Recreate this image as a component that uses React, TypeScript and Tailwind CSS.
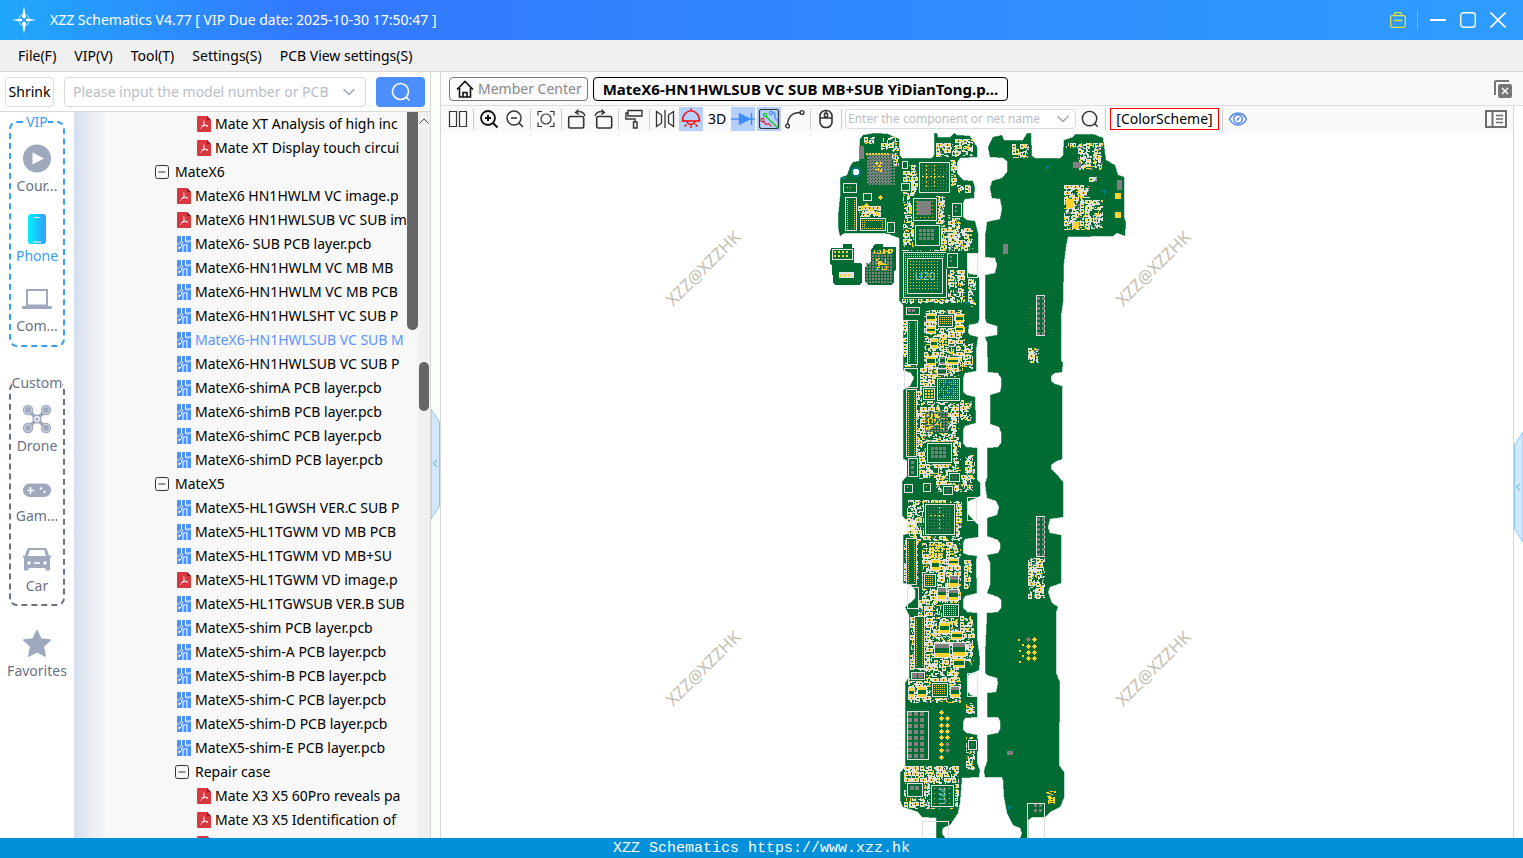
import type { ReactNode } from 'react';

type FileKind = 'pdf' | 'pcb' | 'folder';

type TreeRow = {
  kind: FileKind;
  label: string;
  level: number;
  active?: boolean;
};

const rows: TreeRow[] = [
  { kind: 'pdf', label: 'Mate XT Analysis of high inc', level: 2 },
  { kind: 'pdf', label: 'Mate XT Display touch circui', level: 2 },
  { kind: 'folder', label: 'MateX6', level: 0 },
  { kind: 'pdf', label: 'MateX6 HN1HWLM VC image.p', level: 1 },
  { kind: 'pdf', label: 'MateX6 HN1HWLSUB VC SUB im', level: 1 },
  { kind: 'pcb', label: 'MateX6- SUB PCB layer.pcb', level: 1 },
  { kind: 'pcb', label: 'MateX6-HN1HWLM VC MB MB', level: 1 },
  { kind: 'pcb', label: 'MateX6-HN1HWLM VC MB PCB', level: 1 },
  { kind: 'pcb', label: 'MateX6-HN1HWLSHT VC SUB P', level: 1 },
  { kind: 'pcb', label: 'MateX6-HN1HWLSUB VC SUB M', level: 1, active: true },
  { kind: 'pcb', label: 'MateX6-HN1HWLSUB VC SUB P', level: 1 },
  { kind: 'pcb', label: 'MateX6-shimA PCB layer.pcb', level: 1 },
  { kind: 'pcb', label: 'MateX6-shimB PCB layer.pcb', level: 1 },
  { kind: 'pcb', label: 'MateX6-shimC PCB layer.pcb', level: 1 },
  { kind: 'pcb', label: 'MateX6-shimD PCB layer.pcb', level: 1 },
  { kind: 'folder', label: 'MateX5', level: 0 },
  { kind: 'pcb', label: 'MateX5-HL1GWSH VER.C SUB P', level: 1 },
  { kind: 'pcb', label: 'MateX5-HL1TGWM VD MB PCB', level: 1 },
  { kind: 'pcb', label: 'MateX5-HL1TGWM VD MB+SU', level: 1 },
  { kind: 'pdf', label: 'MateX5-HL1TGWM VD image.p', level: 1 },
  { kind: 'pcb', label: 'MateX5-HL1TGWSUB VER.B SUB', level: 1 },
  { kind: 'pcb', label: 'MateX5-shim PCB layer.pcb', level: 1 },
  { kind: 'pcb', label: 'MateX5-shim-A PCB layer.pcb', level: 1 },
  { kind: 'pcb', label: 'MateX5-shim-B PCB layer.pcb', level: 1 },
  { kind: 'pcb', label: 'MateX5-shim-C PCB layer.pcb', level: 1 },
  { kind: 'pcb', label: 'MateX5-shim-D PCB layer.pcb', level: 1 },
  { kind: 'pcb', label: 'MateX5-shim-E PCB layer.pcb', level: 1 },
  { kind: 'folder', label: 'Repair case', level: 1 },
  { kind: 'pdf', label: 'Mate X3 X5 60Pro reveals pa', level: 2 },
  { kind: 'pdf', label: 'Mate X3 X5 Identification of', level: 2 },
  { kind: 'pdf', label: '', level: 2 },
];

const menus = ['File(F)', 'VIP(V)', 'Tool(T)', 'Settings(S)', 'PCB View settings(S)'];

function PdfIcon() {
  return (
    <svg width="14" height="16" viewBox="0 0 14 16" className="shrink-0">
      <path d="M1 0h9l4 4v11a1 1 0 0 1-1 1H1a1 1 0 0 1-1-1V1a1 1 0 0 1 1-1z" fill="#d93840" />
      <path d="M10 0v4h4z" fill="#8e1c24" />
      <path d="M6.500 4.500c1.200 2 .2 5-3 8M7 7.500c.8 1.600 2 2.500 4 2.800M4.500 10.500c2-1 4-1.200 6-.8" fill="none" stroke="#fff" strokeWidth="1" />
    </svg>
  );
}

function PcbIcon() {
  return (
    <svg width="14" height="16" viewBox="0 0 14 16" className="shrink-0">
      <rect width="14" height="16" rx="1" fill="#4a90ff" />
      <path d="M4.500 0v5M8.500 0v6M11 5h3M0 8h2M4.500 7.500v3l-2 1.500M10 9v7M6 9h4M6 9v7" fill="none" stroke="#fff" />
      <circle cx="4.500" cy="6.500" r="1.200" fill="#4a90ff" stroke="#fff" strokeWidth=".8" />
      <circle cx="10.500" cy="5.500" r="1.200" fill="#4a90ff" stroke="#fff" strokeWidth=".8" />
      <circle cx="2" cy="12" r="1" fill="#fff" />
    </svg>
  );
}

function MinusBox() {
  return (
    <svg width="14" height="14" viewBox="0 0 14 14" className="shrink-0" fill="none" stroke="#333">
      <rect x=".5" y=".5" width="13" height="13" rx="2" />
      <path d="M3.500 7h7" />
    </svg>
  );
}

function SearchGlyph({ color, size = 20 }: { color: string; size?: number }) {
  return (
    <svg width={size} height={size} viewBox="0 0 20 20" fill="none" stroke={color} strokeWidth="1.600">
      <circle cx="9.500" cy="9.500" r="8" />
      <path d="M15 15l3.500 3.500" />
    </svg>
  );
}

function TitleBar() {
  return (
    <header className="flex h-10 shrink-0 items-center bg-linear-to-r from-[#1fa8fb] via-[#3377ff] via-20% to-[#2e9dff] text-white">
      <svg width="24" height="28" viewBox="0 0 24 28" className="ml-3">
        <circle cx="12" cy="14" r="5.500" fill="none" stroke="#bfe3ff" strokeWidth="1" strokeDasharray="5 3.600" strokeDashoffset="-2" />
        <path d="M12 0l2 11-2 2-2-2zM12 28l2-11-2-2-2 2zM0 14l9-1.500 2 1.500-2 1.500zM24 14l-9-1.500-2 1.500 2 1.500z" fill="#fff" />
        <circle cx="12" cy="14" r="1.500" fill="#3b8cff" />
      </svg>
      <h1 className="ml-3.5 grow text-sm">XZZ Schematics V4.77 [ VIP Due date: 2025-10-30 17:50:47 ]</h1>
      <button aria-label="Toolbox">
        <svg width="16" height="16" viewBox="0 0 16 16" fill="none" stroke="#e2e337" strokeWidth="1.300">
          <rect x=".7" y="3.700" width="14.600" height="11.600" rx="1.500" />
          <path d="M4.500 3.500V2A1.300 1.300 0 0 1 5.800.7h4.400A1.300 1.300 0 0 1 11.500 2v1.500M4 8.500h8" />
        </svg>
      </button>
      <span className="ml-[11px] h-5 w-px bg-[#63b6ff]" />
      <div className="mr-[17px] ml-3 flex gap-3.5">
        <button aria-label="Minimize">
          <svg width="16" height="16" viewBox="0 0 16 16" stroke="#fff" strokeWidth="2"><path d="M0 8h16" /></svg>
        </button>
        <button aria-label="Maximize">
          <svg width="16" height="16" viewBox="0 0 16 16" fill="none" stroke="#fff" strokeWidth="1.400"><rect x=".7" y=".7" width="14.600" height="14.600" rx="3" /></svg>
        </button>
        <button aria-label="Close">
          <svg width="16" height="16" viewBox="0 0 16 16" stroke="#fff" strokeWidth="1.600"><path d="M.5.5l15 15M15.500.5l-15 15" /></svg>
        </button>
      </div>
    </header>
  );
}

function RailItem({ label, active, children }: { label: string; active?: boolean; children: ReactNode }) {
  return (
    <button className={`flex h-[70px] w-full flex-col items-center text-sm leading-5 ${active ? 'text-[#3b9cf5]' : 'text-[#6b7184]'}`}>
      <span className="flex h-9 items-center">
        <svg width="30" height="32" viewBox="0 0 30 32" fill="#a0a8bd">{children}</svg>
      </span>
      <span className="-mt-px">{label}</span>
    </button>
  );
}

function Rail() {
  return (
    <nav className="flex w-[74px] shrink-0 flex-col items-center bg-white">
      <fieldset className="w-14 min-w-0 rounded-lg border-2 border-dashed border-[#3b9cf5]">
        <legend className="mx-auto text-sm leading-5 text-[#3b9cf5]">VIP</legend>
        <div className="-mt-px h-[214px] pt-2.5">
          <RailItem label="Cour...">
            <circle cx="15" cy="15.500" r="14" />
            <path d="M10.500 9.500v12l11.500-6z" fill="#fff" />
          </RailItem>
          <RailItem label="Phone" active>
            <defs>
              <linearGradient id="phone" x1="0" x2="1">
                <stop offset="0" stopColor="#00f0ff" />
                <stop offset="1" stopColor="#389cfb" />
              </linearGradient>
            </defs>
            <rect x="6" y="1" width="18" height="30" rx="3" fill="url(#phone)" />
            <path d="M12.500 4.500h5M11 29h8" stroke="#fff" strokeWidth="1.200" />
          </RailItem>
          <RailItem label="Com...">
            <path d="M4 6h22v17h4v1.500a1.500 1.500 0 0 1-1.500 1.500h-27A1.500 1.500 0 0 1 0 24.500V23h4zM6 8v13.500h18V8z" fillRule="evenodd" />
          </RailItem>
        </div>
      </fieldset>
      <fieldset className="mt-[26px] w-14 min-w-0 rounded-lg border-2 border-dashed border-[#6b7184]">
        <legend className="mx-auto text-sm leading-5 text-[#6b7184]">Custom</legend>
        <div className="-mt-0.5 h-[213px] pt-2.5">
          <RailItem label="Drone">
            <path d="M7 8l16 16M23 8L7 24" stroke="#a0a8bd" strokeWidth="3.500" />
            {[[6, 7], [24, 7], [6, 25], [24, 25]].map(([x, y]) => (
              <g key={`${x}-${y}`}>
                <circle cx={x} cy={y} r="5.200" />
                <circle cx={x} cy={y} r="3.600" fill="none" stroke="#dfe3ec" strokeWidth=".8" />
              </g>
            ))}
            <circle cx="15" cy="16" r="4.500" />
            <circle cx="15" cy="16" r="2.300" fill="none" stroke="#fff" strokeWidth="1.200" />
          </RailItem>
          <RailItem label="Gam...">
            <rect x="1" y="10.500" width="28" height="13.500" rx="6.700" />
            <path d="M8.500 14v7M5 17.500h7" stroke="#fff" strokeWidth="1.500" />
            <circle cx="19" cy="15.500" r="1.200" fill="#fff" />
            <circle cx="22.500" cy="19" r="1.200" fill="#fff" />
          </RailItem>
          <RailItem label="Car">
            <path d="M7 5h16q1.500 0 2 1.500l2 6h2v2h-1v12q0 1-1 1h-2.500q-1 0-1-1V25h-17v1.500q0 1-1 1H3q-1 0-1-1v-12H1v-2h2l2-6Q5.500 5 7 5zM7.800 7l-1.800 6h18L22.200 7z" fillRule="evenodd" />
            <circle cx="7" cy="20" r="1.800" fill="#fff" />
            <circle cx="23" cy="20" r="1.800" fill="#fff" />
            <path d="M12 20h6" stroke="#fff" strokeWidth="1.600" />
          </RailItem>
        </div>
      </fieldset>
      <div className="mt-5 w-full">
        <RailItem label="Favorites">
          <path d="M15 2.500l3.900 8.600 9.300 1-6.900 6.400 1.900 9.600L15 23.600l-8.200 4.500 1.900-9.600-6.900-6.400 9.300-1z" stroke="#a0a8bd" strokeWidth="1.500" strokeLinejoin="round" />
        </RailItem>
      </div>
    </nav>
  );
}

function FileTree() {
  return (
    <div className="flex min-w-0 grow bg-[#f8f8f8]">
      <div className="w-8 shrink-0 bg-linear-to-r from-[#d5dff0] via-[#e8ebf2] to-[#f8f8f8]" />
      <ul className="min-w-0 grow overflow-hidden pl-[49px] text-sm leading-6">
        {rows.map(row => (
          <li key={row.label} className={row.level === 0 ? '' : row.level === 1 ? 'pl-5' : 'pl-10'}>
            <button className={`flex h-6 items-center whitespace-nowrap ${row.active ? 'text-[#5c95ff]' : 'text-black'}`}>
              <span className={row.kind === 'folder' ? 'mr-1.5' : 'mr-1 ml-0.5'}>
                {row.kind === 'pdf' && <PdfIcon />}
                {row.kind === 'pcb' && <PcbIcon />}
                {row.kind === 'folder' && <MinusBox />}
              </span>
              {row.label}
            </button>
          </li>
        ))}
      </ul>
      <div className="w-[11px] shrink-0">
        <div className="h-[218px] rounded-b-md bg-[#666]" />
      </div>
      <div className="flex w-3 shrink-0 flex-col items-center bg-[#f0f0f0] pt-1.5">
        <svg width="10" height="6" viewBox="0 0 10 6" fill="none" stroke="#444"><path d="M.5 5.500L5 1l4.500 4.500" /></svg>
        <div className="mt-[238px] h-[49px] w-2.5 rounded-full bg-[#666]" />
      </div>
    </div>
  );
}

function Sidebar() {
  return (
    <aside className="flex w-[431px] shrink-0 flex-col overflow-hidden border-r border-[#d8d8d8] bg-white">
      <form className="flex h-10 shrink-0 items-center border-b border-[#d8dbd8] px-[5px]">
        <button type="button" className="h-[30px] w-[49px] shrink-0 rounded-sm border border-[#ddd] text-sm">Shrink</button>
        <label className="ml-2.5 flex h-[30px] min-w-0 grow items-center rounded-sm border border-[#d8dbe2] pr-2.5 pl-2">
          <input className="min-w-0 grow text-sm outline-none placeholder:text-[#b9bec8]" placeholder="Please input the model number or PCB" aria-label="Model number or PCB" />
          <svg width="12" height="8" viewBox="0 0 12 8" fill="none" stroke="#a0a5b0" strokeWidth="1.500"><path d="M.5 1L6 6.500 11.500 1" /></svg>
        </label>
        <button type="button" aria-label="Search" className="ml-2.5 flex h-[30px] w-[49px] shrink-0 items-center justify-center rounded-sm bg-[#4c90ff]">
          <SearchGlyph color="#fff" />
        </button>
      </form>
      <div className="flex min-h-0 grow">
        <Rail />
        <FileTree />
      </div>
    </aside>
  );
}

function Tool({ label, active, children }: { label: string; active?: boolean; children: ReactNode }) {
  return (
    <button aria-label={label} className={`flex size-6 shrink-0 items-center justify-center ${active ? 'bg-[#b5d0fc]' : ''}`}>
      <svg width="24" height="24" viewBox="0 0 24 24" fill="none" stroke="#333" strokeWidth="1.400">{children}</svg>
    </button>
  );
}

function Separator() {
  return <span className="mx-px h-5 w-px shrink-0 bg-[#ccc]" />;
}

function Toolbar() {
  return (
    <div className="flex h-[26px] shrink-0 items-center gap-0.5 bg-[#fafafa] pl-[5px]">
      <Tool label="Split view"><path d="M3.500 4.500h7v15h-7zM13.500 4.500h7v15h-7z" strokeWidth="1.200" /></Tool>
      <Separator />
      <Tool label="Zoom in"><circle cx="11" cy="11" r="7" strokeWidth="1.800" stroke="#111" /><path d="M16 16l4.500 4.500M11 8v6M8 11h6" strokeWidth="2" stroke="#111" /></Tool>
      <Tool label="Zoom out"><circle cx="11" cy="11" r="7" /><path d="M16 16l4 4M8 11h6" strokeWidth="1.600" /></Tool>
      <Separator />
      <Tool label="Fit"><path d="M4 8.500V4.500h4M16 4.500h4v4M20 15.500v4h-4M8 19.500H4v-4" strokeWidth="1.200" /><circle cx="12" cy="12" r="5" strokeWidth="1.200" /></Tool>
      <Separator />
      <Tool label="Rotate left"><rect x="3.700" y="9.500" width="15" height="11.500" rx="1.500" strokeWidth="1.600" /><path d="M11 5.500C15 3.500 19 5 20 9M13.500 2.500L10.500 5.500l3.500 2" /></Tool>
      <Tool label="Rotate right"><rect x="5.700" y="9.500" width="15" height="11.500" rx="1.500" strokeWidth="1.600" /><path d="M4 9C5 5 9 3.500 13.500 5.500M10.500 2.500l3 3-3.500 2" /></Tool>
      <Separator />
      <Tool label="Format"><path d="M6 3.500h14v5.500H6zM6 6H4v6h9v3M11.500 15h3.500v6h-3.500z" /></Tool>
      <Separator />
      <Tool label="Mirror"><path d="M3.500 4.500l5 3.500v8l-5 3.500zM20.500 4.500l-5 3.500v8l5 3.500zM12 3v18" strokeWidth="1.300" /></Tool>
      <Tool label="Lamp" active><path d="M3.500 14C3.500 .5 20.500 .5 20.500 14zM8.500 14v2q3.500 3 7 0v-2M12 1.500v3M12 18.500v2.500M7.500 17.500L5.500 19.500M16.500 17.500l2 2" stroke="#f00" strokeWidth="1.400" /></Tool>
      <button className="w-6 text-center text-sm">3D</button>
      <Tool label="Diode" active><path d="M0 12h24" stroke="#3f8cff" /><path d="M8.500 7v10l10-5z" fill="#3f8cff" stroke="#3f8cff" /><path d="M20.500 6v12" stroke="#3f8cff" /></Tool>
      <Tool label="Nets" active>
        <g strokeWidth="1.200">
          <rect x="2.500" y="2.500" width="19" height="19" rx="2" stroke="#333" />
          <path d="M9 9.500L21 21" stroke="#12c41c" /><circle cx="8" cy="8" r="1.600" stroke="#12c41c" />
          <path d="M15.500 6h2.500v5l3 3" stroke="#3f8cff" /><circle cx="14" cy="6" r="1.600" stroke="#3f8cff" />
          <path d="M6.500 14.500l2.500 3 3-1 2 3" stroke="#f0202c" /><circle cx="5.500" cy="13" r="1.600" stroke="#f0202c" />
        </g>
      </Tool>
      <Tool label="Route"><path d="M4.500 17.500C5 10 9.500 5.500 17.500 5.500" /><circle cx="4.500" cy="19" r="1.900" /><circle cx="19" cy="5.500" r="1.900" /></Tool>
      <Separator />
      <Tool label="Mouse"><rect x="6" y="3.500" width="12" height="17" rx="5.500" strokeWidth="1.600" /><path d="M6 11h12M12 3.500v3M10.500 6.500h3v3.500h-3z" /></Tool>
      <Separator />
      <label className="flex h-5 w-[231px] items-center rounded-sm border border-[#d8dbe2] bg-white pr-1.5 pl-0.5">
        <input className="min-w-0 grow text-xs outline-none placeholder:text-[#b9bec8]" placeholder="Enter the component or net name" aria-label="Component or net name" />
        <svg width="12" height="8" viewBox="0 0 12 8" fill="none" stroke="#a0a5b0" strokeWidth="1.500"><path d="M.5 1L6 6.500 11.500 1" /></svg>
      </label>
      <button aria-label="Find" className="flex size-6 items-center justify-center"><SearchGlyph color="#333" size={18} /></button>
      <Separator />
      <button className="ml-px h-[22px] w-[109px] border border-[#f00] bg-white text-sm leading-5">[ColorScheme]</button>
      <Separator />
      <Tool label="Visibility"><path d="M3.500 12C7.500 4 16.500 4 20.500 12 16.500 20 7.500 20 3.500 12z" stroke="#4a83e8" /><circle cx="12" cy="12" r="4.300" stroke="#4a83e8" /><path d="M10.500 13.500l3-3" stroke="#4a83e8" /></Tool>
      <button aria-label="Side panel" className="mr-1.5 ml-auto">
        <svg width="22" height="18" viewBox="0 0 22 18" fill="none" stroke="#6e6e6e" strokeWidth="2">
          <path d="M1 1h20v16H1zM7.500 1v16" />
          <path d="M11 5.500h7M11 9h7M11 12.500h7" strokeWidth="1.400" />
        </svg>
      </button>
    </div>
  );
}

// ---- board drawing ----

const GREEN = '#006b33';
const YELLOW = '#ffd42e';
const SILK = '#e2e2e2';
const GRAY = '#808080';
const TEAL = '#007b83';

type Box = [number, number, number, number];

// short dashes and pads spread over an area, repeatable for a given seed
function scatter([x, y, w, h]: Box, count: number, seed: number) {
  let s = seed * 7919 + 17;
  const next = (n: number) => {
    s = (s * 1103515245 + 12345) % 2147483648;
    return Math.floor((s / 2147483648) * n);
  };
  let d = '';
  for (let i = 0; i < count; i++) {
    const long = 1 + next(4);
    const shape = next(5);
    const dw = shape < 2 ? long : shape === 4 ? 2 : 1;
    const dh = shape < 2 ? 1 : shape === 4 ? 2 : long;
    d += `M${x + next(w - dw)} ${y + next(h - dh)}h${dw}v${dh}h-${dw}z`;
  }
  return d;
}

// outlined two-pad parts laid on a loose raster, some places left empty
function smallParts([x, y, w, h]: Box, seed: number) {
  const outline: string[] = [];
  const pads: string[] = [];
  let s = seed * 31 + 7;
  for (let j = y; j + 5 <= y + h; j += 6) {
    for (let i = x; i + 7 <= x + w; i += 8) {
      s = (s * 1103515245 + 12345) % 2147483648;
      const pick = Math.floor(s / 65536) % 3;
      if (pick === 0) {
        outline.push(`M${i + 0.5} ${j + 0.5}h6v3h-6z`);
        pads.push(`M${i + 1} ${j + 1}h2v2h-2zM${i + 4} ${j + 1}h2v2h-2z`);
      } else if (pick === 1) {
        outline.push(`M${i + 0.5} ${j + 0.5}h3v4h-3z`);
        pads.push(`M${i + 1} ${j + 1}h2v1h-2zM${i + 1} ${j + 3}h2v1h-2z`);
      }
    }
  }
  return { outline: outline.join(''), pads: pads.join('') };
}

function grid([x, y, w, h]: Box, step: number, size: number) {
  let d = '';
  for (let j = y; j + size <= y + h; j += step) {
    for (let i = x; i + size <= x + w; i += step) d += `M${i} ${j}h${size}v${size}h-${size}z`;
  }
  return d;
}

function Parts({ areas, density = 0.15 }: { areas: Box[]; density?: number }) {
  return (
    <>
      {areas.map((a, i) => {
        const n = Math.round(a[2] * a[3] * density);
        const small = smallParts(a, i + 1);
        return (
          <g key={i}>
            <path d={scatter(a, n, i + 3)} fill={SILK} />
            <path d={scatter(a, Math.round(n * 0.25), i + 50)} fill={YELLOW} />
            <path d={scatter(a, Math.round(n * 0.06), i + 90)} fill={GRAY} />
            <path d={small.outline} fill={GREEN} stroke={SILK} />
            <path d={small.pads} fill={YELLOW} />
          </g>
        );
      })}
    </>
  );
}

function Chip({ box: [x, y, w, h], dot = GRAY, step = 2, size = 1, inset = 3 }: { box: Box; dot?: string; step?: number; size?: number; inset?: number }) {
  return (
    <g>
      <rect x={x - 1} y={y - 1} width={w + 2} height={h + 2} fill={GREEN} />
      <rect x={x + 0.5} y={y + 0.5} width={w - 1} height={h - 1} fill={GREEN} stroke={SILK} />
      <path d={grid([x + inset, y + inset, w - inset * 2, h - inset * 2], step, size)} fill={dot} />
    </g>
  );
}

function Pads({ box: [x, y, w, h], top = YELLOW, bottom = YELLOW }: { box: Box; top?: string; bottom?: string }) {
  const pad = Math.floor((h - 3) / 2.5);
  return (
    <g>
      <rect x={x + 0.5} y={y + 0.5} width={w - 1} height={h - 1} fill={GREEN} stroke={SILK} />
      <rect x={x + 1} y={y + 1} width={w - 2} height={pad} fill={top} />
      <rect x={x + 1} y={y + h - 1 - pad} width={w - 2} height={pad} fill={bottom} />
    </g>
  );
}

function Connector({ box: [x, y, w, h] }: { box: Box }) {
  return (
    <g>
      <rect x={x + 0.5} y={y + 0.5} width={w - 1} height={h - 1} fill={GREEN} stroke={SILK} />
      <path d={grid([x + 2, y + 3, 1, h - 5], 2, 1) + grid([x + w - 3, y + 3, 1, h - 5], 2, 1)} fill={YELLOW} />
    </g>
  );
}

function Diamonds({ points, color = YELLOW }: { points: [number, number][]; color?: string }) {
  return <path d={points.map(([x, y]) => `M${x - 2} ${y}h1v-1h1v-1h1v1h1v1h1v1h-1v1h-1v1h-1v-1h-1v-1h-1z`).join('')} fill={color} />;
}

const leftOutline =
  'M860 139L863 135 875 133 888 134 899 139 900 156 902 158H932L934 155V133H937L938 137H950L954 133 957 135 970 136 977 147V157L960 158 957 163V173L963 180 973 181 975 187 974 198 965 199 963 203V217L967 220 975 221 978 233V253L968 254 967 258V272L969 274 977 275 979 278V320L978 323 969 325 968 333 970 335 978 337 976 350V371L965 373 963 378V392L967 395 975 397 976 423 965 426 963 430V443L966 447 977 448V480L980 483V496L967 502V513L978 525V537L965 539 963 543V553L968 555 977 556 976 562 977 593 965 596 963 600V608L967 612 977 613V637L980 660 979 670 968 675 967 690 970 695 977 697V717L965 718 963 722V730L967 733 977 735V763L980 770 979 777 962 778 960 803 958 813 950 825 943 828 942 833 945 838H936V818L922 817 918 812 903 807 900 800V773L905 767V683L909 677V615L905 607 910 603 915 598V590L912 586 903 583V535L915 532 917 527 915 520 905 519 902 515V482L905 478 912 472 915 467 912 462 903 459V390L910 386 914 378 911 373 903 370V305L899 300V238L896 237 886 233H845L840 236 838 227V217L840 197V178L847 175 850 167 853 162 859 161z';

const rightOutline =
  'M988 147L993 137 1002 135 1004 140H1023L1027 133H1031L1032 156 1035 158H1060L1063 155 1064 140 1073 137 1075 134H1093L1103 138 1106 160 1115 165 1118 175 1124 177V217L1126 222 1125 236 1117 233 1113 236 1068 237 1066 247 1064 263 1063 302 1061 317V360L1063 363 1062 372 1055 373 1051 376V381L1055 384 1062 386V459L1055 462 1051 465V469L1055 473 1059 477 1063 482V517L1050 519 1048 527 1050 533 1061 535V583L1050 587 1048 592 1052 603 1058 607 1056 612V673L1060 682 1059 765 1064 772V798L1060 807 1050 812 1045 817H1033L1028 820V838H1020L1022 833 1020 828 1013 825 1007 813 1004 797 1003 780 1002 777H985L984 770 987 762V735L998 733 1000 729V721L998 717H987V693L996 692 998 683 997 678 987 675 985 672V657L987 613 998 612 1001 608V600L998 597 987 593 990 585V562L987 555 998 553 1000 549V543L998 540 987 536V518L997 515 999 507 996 501 987 498 985 483 987 478V448L998 447 1001 443V432L999 427 990 424V395L1000 392 1001 388V378L998 373 988 372 987 342 985 337 997 335V326L987 323 985 318V275L995 273 997 265 995 258 985 257V237L987 222 1000 219 1002 208 1000 199 992 198 990 188 992 181 1002 178 1007 172V161L1003 158 990 157z';

const marks: [number, number][] = [[703, 268], [1153, 268], [703, 668], [1153, 668]];

function BoardView() {
  return (
    <svg viewBox="441 132 1072 706" preserveAspectRatio="xMidYMin slice" className="size-full">
      <g shapeRendering="crispEdges">
        <path d={leftOutline} fill={GREEN} stroke="#7fb599" strokeWidth=".5" />
        <path d={rightOutline} fill={GREEN} stroke="#7fb599" strokeWidth=".5" />
        <path d="M830 250l2-2h11v-4h9v4h2v15h7l1 2v17l-3 3h-23l-3-2-1-17-2-3z" fill={GREEN} />
        <path d="M871 250l4-6h8v3h13v22l-2 2v11l-3 3h-23l-3-4v-14l6-6z" fill={GREEN} />

        <Parts
          areas={[
            [864, 137, 12, 8], [881, 137, 18, 14], [892, 148, 8, 20], [936, 143, 22, 15], [955, 139, 19, 18],
            [903, 165, 15, 50], [950, 160, 7, 28], [957, 185, 15, 9], [936, 196, 10, 52], [903, 215, 12, 33], [948, 215, 14, 32],
            [940, 228, 34, 24], [902, 250, 46, 55], [942, 270, 24, 34], [968, 279, 9, 30],
            [924, 310, 42, 62], [964, 343, 10, 27], [920, 368, 40, 40], [920, 407, 40, 40], [960, 400, 13, 22], [918, 440, 44, 40],
            [965, 455, 11, 26], [936, 475, 38, 18], [907, 500, 56, 42], [922, 542, 40, 60], [964, 560, 9, 30],
            [918, 600, 42, 80], [960, 616, 15, 50], [908, 678, 54, 26], [966, 703, 10, 12], [966, 737, 10, 34],
            [904, 766, 56, 44], [848, 200, 4, 30], [864, 206, 12, 12], [858, 206, 24, 13],
          ]}
        />
        <Parts areas={[[903, 320, 16, 48], [916, 390, 5, 68], [904, 540, 16, 42], [910, 617, 16, 53]]} density={0.12} />
        <Parts areas={[[1012, 144, 18, 15], [1066, 143, 14, 6], [1078, 143, 26, 28], [1064, 185, 27, 46], [1085, 200, 19, 30], [1089, 177, 9, 6], [1028, 348, 12, 16], [1028, 558, 18, 42]]} density={0.17} />

        {/* gray ball fields */}
        <path d={grid([867, 154, 23, 30], 3, 2) + grid([869, 153, 26, 34], 3, 2) + grid([866, 263, 28, 21], 3, 2) + grid([872, 252, 20, 12], 3, 2)} fill={GRAY} />
        <path d={grid([866, 153, 24, 3], 3, 2) + scatter([874, 249, 20, 6], 22, 8) + scatter([872, 160, 12, 14], 14, 9) + scatter([876, 258, 12, 14], 18, 10)} fill={YELLOW} />
        <rect x="859" y="146" width="5" height="13" fill={GRAY} />

        <Chip box={[919, 162, 31, 31]} step={3} inset={3} />
        <path d="M926 165v22M934 165v22M922 176h24" stroke={YELLOW} strokeDasharray="2 2" />
        <Chip box={[913, 198, 24, 23]} dot={YELLOW} step={4} />
        <rect x="917" y="201" width="14" height="14" fill={GRAY} />
        <Chip box={[915, 225, 25, 21]} step={4} size={3} inset={4} />
        <Chip box={[903, 252, 44, 46]} dot={YELLOW} step={2} inset={2} />
        <Chip box={[907, 258, 36, 36]} dot={YELLOW} step={3} />
        <path d={grid([912, 262, 28, 28], 3, 1)} fill={TEAL} />
        <Chip box={[947, 253, 11, 15]} step={4} size={2} />
        <Chip box={[952, 203, 10, 14]} step={4} size={2} />
        <Chip box={[902, 161, 6, 8]} />
        <Chip box={[901, 183, 9, 8]} size={4} step={5} />
        <Chip box={[843, 183, 14, 10]} dot={YELLOW} step={3} inset={4} />
        <Chip box={[863, 193, 9, 8]} size={4} step={5} dot={GREEN} />
        <Connector box={[845, 197, 12, 34]} />
        <Chip box={[860, 218, 26, 13]} dot={YELLOW} inset={2} />
        <rect x="865" y="221" width="17" height="7" fill={GREEN} />
        <Chip box={[887, 222, 8, 11]} />
        <Chip box={[832, 249, 21, 11]} dot={YELLOW} step={4} size={2} inset={2} />
        <path d="M839 272h15v6h-15z" fill={SILK} />
        <path d="M840 274h2v3h-2zM844 274h2v3h-2zM848 274h2v3h-2z" fill={YELLOW} />

        <Chip box={[906, 307, 14, 8]} step={4} size={3} inset={2} />
        <Connector box={[907, 320, 11, 45]} />
        <Chip box={[938, 315, 15, 12]} dot={YELLOW} inset={2} />
        {([[926, 313, 10, 9], [955, 314, 9, 9], [926, 326, 10, 8], [955, 325, 9, 8], [930, 338, 8, 11], [926, 356, 10, 10], [947, 357, 12, 8], [931, 559, 9, 12], [948, 558, 11, 8], [908, 687, 7, 11], [917, 686, 10, 12], [953, 658, 12, 10], [951, 631, 12, 9], [939, 622, 11, 12]] as Box[]).map(b => (
          <Pads key={b.join()} box={b} />
        ))}
        <path d={grid([939, 338, 10, 10], 3, 2)} fill={YELLOW} />
        <Pads box={[939, 356, 7, 9]} top={GRAY} bottom={GRAY} />
        <Pads box={[937, 368, 10, 7]} top={GRAY} bottom={GRAY} />
        <Chip box={[937, 378, 23, 23]} dot={YELLOW} inset={2} />
        <path d={scatter([939, 380, 19, 19], 50, 4)} fill={TEAL} />
        <Chip box={[923, 388, 12, 12]} dot={YELLOW} inset={2} step={3} size={2} />
        <rect x="925" y="412" width="23" height="20" fill={GREEN} />
        <path d={grid([925, 412, 23, 20], 3, 2)} fill={GRAY} />
        <path d={scatter([926, 414, 20, 17], 34, 6)} fill={YELLOW} />
        <Chip box={[927, 443, 25, 20]} step={4} size={3} inset={4} />
        <Connector box={[906, 389, 11, 68]} />
        <Chip box={[908, 458, 10, 19]} step={5} size={3} />
        <Chip box={[904, 484, 9, 9]} dot={YELLOW} step={6} />
        <Chip box={[923, 483, 8, 9]} dot={YELLOW} step={6} />
        <Chip box={[949, 473, 11, 9]} />
        <Chip box={[943, 486, 10, 9]} />

        <Chip box={[925, 504, 30, 31]} step={3} />
        <path d="M939 507v24M930 515h16" stroke={YELLOW} strokeDasharray="2 2" />
        <Connector box={[906, 538, 11, 47]} />
        <path d={grid([929, 544, 16, 14], 3, 2)} fill={YELLOW} />
        <Chip box={[924, 574, 12, 13]} dot={YELLOW} inset={2} />
        {([[949, 575, 10, 13], [937, 587, 10, 13], [948, 589, 11, 12], [934, 643, 16, 15], [952, 642, 14, 15], [950, 686, 10, 12]] as Box[]).map(b => (
          <Pads key={b.join()} box={b} top={GRAY} />
        ))}
        <Chip box={[943, 604, 16, 13]} dot={YELLOW} inset={2} />
        <Connector box={[914, 616, 11, 53]} />
        <Chip box={[911, 672, 14, 8]} step={6} size={5} inset={1} />
        <Chip box={[932, 683, 16, 14]} dot={YELLOW} inset={2} />
        <Chip box={[907, 711, 22, 49]} step={6} size={4} inset={1} />
        <Diamonds points={[[941, 712], [941, 718], [941, 725], [941, 731], [941, 737], [941, 744], [941, 750], [941, 757], [947, 718], [947, 725], [947, 731], [947, 737]]} />
        <Diamonds points={[[947, 744], [947, 750]]} color={GRAY} />
        <Chip box={[968, 740, 9, 10]} />
        <Chip box={[907, 783, 16, 14]} step={5} size={4} inset={3} />
        <Chip box={[931, 785, 23, 22]} dot={YELLOW} step={5} />
        <Diamonds points={[[862, 207], [866, 205], [871, 209], [876, 213], [880, 197]]} />
        <circle cx="856" cy="172" r="5" fill={TEAL} />
        <circle cx="856" cy="172" r="3" fill="#fff" />

        {/* back side */}
        <path d="M1003 244h5v10h-5zM1007 751h6v4h-6zM1073 162h8v6h-8zM1117 180h5v10h-5z" fill={GRAY} />
        <path d="M1115 193h6v6h-6zM1115 212h6v6h-6zM1066 199h8v9h-8zM1073 222h6v7h-6z" fill={YELLOW} />
        <path d="M1036.500 295.500h8v40h-8zM1036.500 516.500h8v40h-8z" fill="none" stroke={SILK} />
        <path d={grid([1037, 297, 8, 38], 5, 3) + grid([1037, 518, 8, 38], 5, 3) + grid([1034, 804, 9, 12], 5, 3)} fill={GRAY} />
        <Diamonds points={[[1034, 639], [1028, 646], [1034, 646], [1028, 652], [1034, 652], [1028, 658], [1034, 658]]} />
        <path d="M1018 639h2v2h-2zM1022 644h2v2h-2zM1019 650h2v2h-2zM1022 655h2v2h-2zM1019 661h2v2h-2z" fill={YELLOW} />
        <path d={scatter([1046, 791, 11, 14], 26, 5)} fill={YELLOW} />
        <Diamonds points={[[1028, 639]]} color={GRAY} />
        <Diamonds points={[[1047, 167], [1104, 191], [1009, 807], [843, 178], [966, 302], [920, 610]]} color={TEAL} />

        <path d="M967.500 253.500h10v24h-10zM967.500 497.500h9v23h-9zM967.500 673.500h10v23h-10zM922.500 821.500h26v17h-26zM1027.500 803.500h17v35h-17zM904.500 368.500h13v19h-13zM907.500 587.500h11v21h-11z" fill="none" stroke={SILK} />
      </g>
      <text x="925" y="280" textAnchor="middle" fontSize="11" fill="#8fd0da">U20</text>
      <text transform="translate(946 796) rotate(-90)" textAnchor="middle" fontSize="9" fill="#8fd0da">U44</text>
      {marks.map(([x, y]) => (
        <text key={`${x}-${y}`} transform={`translate(${x} ${y}) rotate(-45)`} textAnchor="middle" dominantBaseline="central" fontSize="17" fill="#c4bfb2">XZZ@XZZHK</text>
      ))}
    </svg>
  );
}

function Workspace() {
  return (
    <main className="flex min-w-0 grow flex-col border-l border-[#d8d8d8] bg-white">
      <div className="flex h-[34px] shrink-0 items-center border-b border-[#ddd] bg-[#fafafa] pr-[11px] pl-2">
        <button className="flex h-6 w-[139px] items-center rounded-sm border border-[#777] pl-1.5 text-sm text-[#888]">
          <svg width="18" height="18" viewBox="0 0 18 18" fill="none" stroke="#111" strokeWidth="1.600" className="mr-1">
            <path d="M1 9.500L9 1.500l8 8M3.500 8v9h11V8M7 17v-4.500h4V17" />
          </svg>
          Member Center
        </button>
        <button className="ml-[5px] h-6 w-[415px] rounded-sm border border-black bg-[#fafafa] text-[15px] leading-5 font-bold whitespace-nowrap">
          MateX6-HN1HWLSUB VC SUB MB+SUB YiDianTong.p...
        </button>
        <button aria-label="Close all tabs" className="ml-auto">
          <svg width="18" height="18" viewBox="0 0 18 18">
            <path d="M1 15V2q0-1 1-1h13" fill="none" stroke="#777" strokeWidth="2" />
            <rect x="4" y="4" width="14" height="14" rx="2" fill="#777" />
            <path d="M8 8l6 6M14 8l-6 6" stroke="#fff" strokeWidth="1.500" />
          </svg>
        </button>
      </div>
      <div className="flex min-h-0 grow">
        <div className="flex min-w-0 grow flex-col">
          <Toolbar />
          <div className="min-h-0 grow overflow-hidden">
            <BoardView />
          </div>
        </div>
        <div className="flex w-2.5 shrink-0 items-center border-l border-[#d8d8d8] bg-[#fdfdfd] pt-[30px]">
          <svg width="9" height="110" viewBox="0 0 9 110">
            <path d="M9 0L.5 13v84L9 110z" fill="#d3e8fd" stroke="#8cc6f5" />
            <path d="M6 51.500L2.500 55 6 58.500" fill="none" stroke="#4aa5ee" />
          </svg>
        </div>
      </div>
    </main>
  );
}

export default function App() {
  return (
    <div className="flex h-screen flex-col overflow-hidden bg-white font-['Noto_Sans','Open_Sans',sans-serif] text-black">
      <TitleBar />
      <nav className="flex h-8 shrink-0 items-center gap-[18px] border-b border-[#d8d8d8] bg-[#f0f0f0] pl-[18px] text-sm">
        {menus.map(menu => (
          <button key={menu}>{menu}</button>
        ))}
      </nav>
      <div className="flex min-h-0 grow">
        <Sidebar />
        <div className="flex w-[9px] shrink-0 items-center bg-[#fbfff8] pt-[18px]">
          <svg width="9" height="110" viewBox="0 0 9 110">
            <path d="M0 0L8.500 13v84L0 110z" fill="#d3e8fd" stroke="#8cc6f5" />
            <path d="M6 51L2.500 54.500 6 58" fill="none" stroke="#4aa5ee" />
          </svg>
        </div>
        <Workspace />
      </div>
      <footer className="h-5 shrink-0 bg-[#0090da] pt-px text-center font-['Liberation_Mono',monospace] text-[15px] leading-5 text-white">
        XZZ Schematics https://www.xzz.hk
      </footer>
    </div>
  );
}
